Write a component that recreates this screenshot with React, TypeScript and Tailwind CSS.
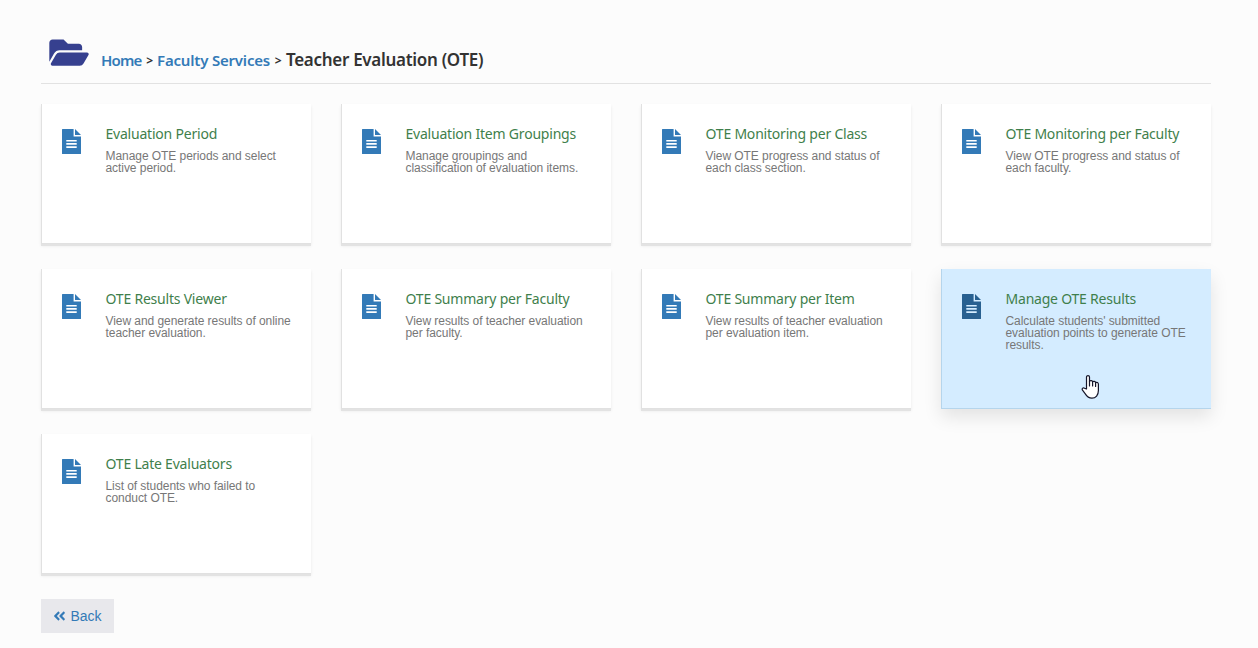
import React from 'react';
import { clsx } from 'clsx';
import { FaFolderOpen, FaAngleDoubleLeft } from 'react-icons/fa';

interface Service {
  title: string;
  description: string;
  active?: boolean;
}

const services: Service[] = [
  { title: 'Evaluation Period', description: 'Manage OTE periods and select active period.' },
  { title: 'Evaluation Item Groupings', description: 'Manage groupings and classification of evaluation items.' },
  { title: 'OTE Monitoring per Class', description: 'View OTE progress and status of each class section.' },
  { title: 'OTE Monitoring per Faculty', description: 'View OTE progress and status of each faculty.' },
  { title: 'OTE Results Viewer', description: 'View and generate results of online teacher evaluation.' },
  { title: 'OTE Summary per Faculty', description: 'View results of teacher evaluation per faculty.' },
  { title: 'OTE Summary per Item', description: 'View results of teacher evaluation per evaluation item.' },
  {
    title: 'Manage OTE Results',
    description: "Calculate students' submitted evaluation points to generate OTE results.",
    active: true,
  },
  { title: 'OTE Late Evaluators', description: 'List of students who failed to conduct OTE.' },
];

function FileIcon({ className }: { className?: string }) {
  return (
    <svg className={className} viewBox="0 0 19 25" fill="currentColor">
      <path
        fillRule="evenodd"
        d="M.6 0H11.6V7.5H19V24.4Q19 25 18.4 25H.6Q0 25 0 24.4V.6Q0 0 .6 0ZM4.3 10.9V12.6H14.7V10.9ZM4.3 14.1V15.8H14.7V14.1ZM4.3 17.3V19H14.7V17.3Z"
      />
      <path d="M13 0L19 6H13Z" />
    </svg>
  );
}

function HandCursor() {
  return (
    <svg
      className="absolute left-[139px] top-[105px] h-[26px] w-[20px]"
      viewBox="0 0 20 26"
      fill="#ffffff"
      stroke="#16162a"
      strokeWidth="1.2"
      strokeLinejoin="round"
      strokeLinecap="round"
    >
      <path d="M5.5 15V3C5.5 1.1 8.5 1.1 8.5 3V7.2C9.5 6.2 11.4 6.5 11.6 7.7C12.5 7 14.3 7.4 14.6 8.6C15.9 7.9 17.4 8.6 17.4 10.2V16.6C17.4 21 14.8 24.2 10.9 24.2C7.4 24.2 5.7 22.2 4.3 19.9L1.5 16.1C.5 14.4 2.2 13.2 3.6 14.2Z" />
      <path d="M8.5 7V12M11.6 8V12M14.6 9V12.5" fill="none" />
    </svg>
  );
}

function ServiceCard({ title, description, active }: Service) {
  return (
    <a
      href="#"
      className={clsx(
        'relative flex h-[140px] border-l pl-5 pt-[25px]',
        active
          ? 'border-b border-[#b5d5ec] bg-[#d4ecff] shadow-[0_8px_17px_0_rgba(0,0,0,0.1)]'
          : 'border-b border-l-[#e1e1e1] border-b-[#e1e1e1] bg-white shadow-[0_2px_0_0_#e3e3e3,0_2px_3px_0_rgba(0,0,0,0.08)]'
      )}
    >
      <FileIcon className={clsx('h-[25px] w-[19px] shrink-0', active ? 'text-[#286090]' : 'text-[#337ab7]')} />
      <div className="-mt-1 ml-[24.5px] w-[190px]">
        <h4 className="whitespace-nowrap font-['Noto_Sans',sans-serif] text-[14px] leading-[18px] tracking-[-0.21px] text-[#3f7f4c]">
          {title}
        </h4>
        <p className="mt-[7px] text-[12px] leading-[12px] tracking-[-0.06px] text-[#777777]">{description}</p>
      </div>
      {active && <HandCursor />}
    </a>
  );
}

export default function App() {
  return (
    <div className="min-h-screen bg-[#fcfcfc] px-[41px] pt-[35px] font-['Liberation_Sans',Arial,sans-serif]">
      <header className="flex h-[49px] w-[1170px] border-b border-[#e2e2e2] pl-2">
        <FaFolderOpen className="h-[35px] w-[40px] shrink-0 text-[#36408f]" />
        <nav className="ml-3 flex h-[50px] items-center whitespace-nowrap font-['Noto_Sans',sans-serif] text-[15px] font-semibold tracking-[-0.19px] text-[#333333]">
          <a href="#" className="w-[41px] tracking-[-0.8px] text-[#337ab7]">Home</a>
          <span className="w-[15px] pt-0.5 text-center text-[12px] font-bold">&gt;</span>
          <a href="#" className="text-[#337ab7]">Faculty Services</a>
          <span className="w-[16px] pt-0.5 text-center text-[12px] font-bold">&gt;</span>
          <span className="text-[17px] tracking-[-0.3px]">Teacher Evaluation (OTE)</span>
        </nav>
      </header>

      <main className="mt-5 grid w-[1170px] grid-cols-4 gap-x-[30px] gap-y-[25px]">
        {services.map((service) => (
          <ServiceCard key={service.title} {...service} />
        ))}
      </main>

      <button className="mt-[25px] flex h-[34px] w-[73px] items-center justify-center gap-1 bg-[#e8e8ec] text-[14px] text-[#337ab7]">
        <FaAngleDoubleLeft className="h-[14px] w-[13px]" />
        Back
      </button>
    </div>
  );
}
